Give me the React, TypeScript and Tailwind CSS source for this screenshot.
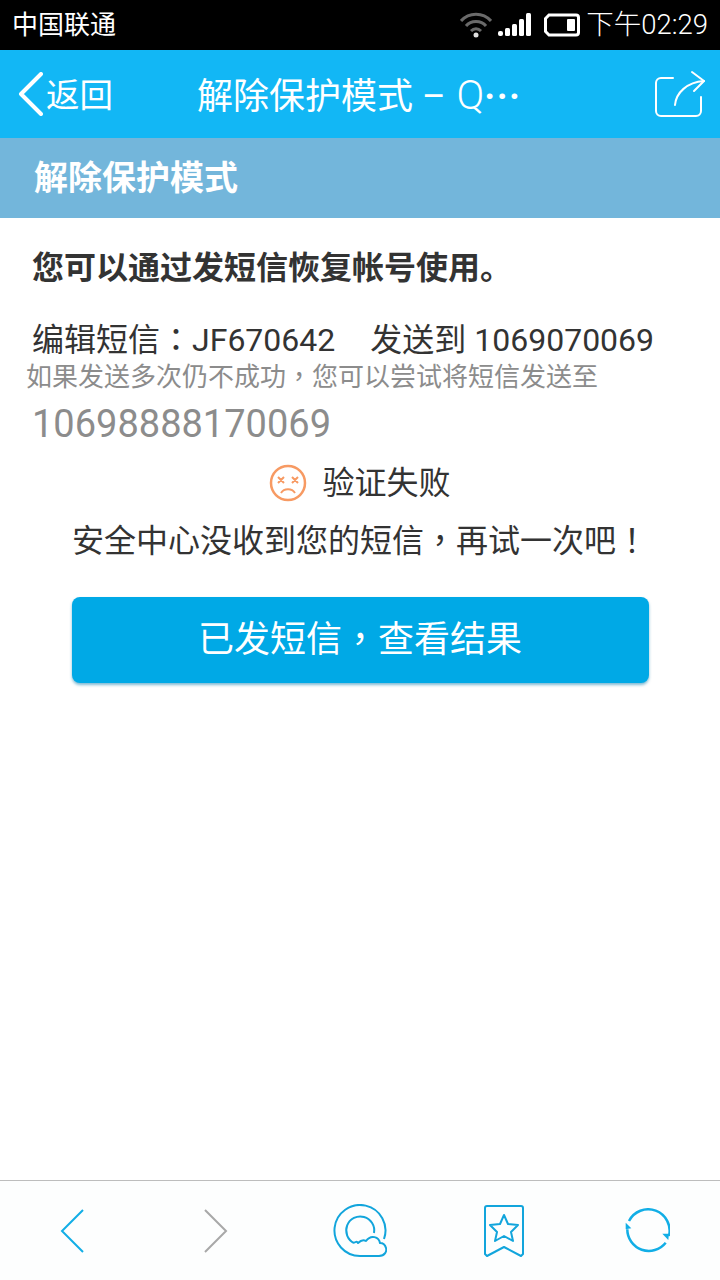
const font = "font-['Roboto','Noto_Sans_CJK_SC',sans-serif]";

// full-width punctuation sits in the middle of the cell in the reference
function P({ children }: { children: string }) {
  return <span className="font-['Roboto','Noto_Sans_CJK_TC',sans-serif]">{children}</span>;
}

function StatusBar() {
  return (
    <div className="flex h-[50px] items-center justify-between bg-black pr-[12px] pl-[12px] text-white">
      <span className="text-[26px] leading-none">中国联通</span>
      <div className="flex items-center">
        <svg width="32" height="26" viewBox="0 0 32 26" fill="none" stroke="#6a6a6a" strokeWidth="3">
          <path d="M1 9C9 0 23 0 31 9" />
          <path d="M6 14C11 8 21 8 26 14" />
          <path d="M11 19C14 16 18 16 21 19" />
          <circle cx="16" cy="23" r="2.500" fill="#e0e0e0" stroke="none" />
        </svg>
        <svg className="ml-[6px]" width="34" height="24" viewBox="0 0 34 24" fill="#fff">
          <rect x="0" y="18" width="5" height="5" rx="2" />
          <rect x="7" y="15" width="5" height="8" rx="1.500" />
          <rect x="14" y="11" width="5" height="12" rx="1.500" />
          <rect x="21" y="6" width="5" height="17" rx="1.500" />
          <rect x="28" y="0" width="5" height="23" rx="1.500" />
        </svg>
        <svg className="ml-[12px]" width="36" height="24" viewBox="0 0 36 24" fill="none">
          <path d="M5 2H32A2.500 2.500 0 0 1 34.500 4.500V19.500A2.500 2.500 0 0 1 32 22H5L1.500 18.500V5.500Z" stroke="#fff" strokeWidth="3" />
          <rect x="23" y="6" width="8" height="12" rx="1" fill="#fff" />
        </svg>
        <span className="ml-[6px] text-[27.5px] leading-none font-light">下午02:29</span>
      </div>
    </div>
  );
}

function NavBar() {
  return (
    <div className="flex h-[88px] items-center bg-[#12b7f5] text-white">
      <svg className="ml-[18px]" width="26" height="44" viewBox="0 0 26 44" fill="none" stroke="#fff" strokeWidth="4" strokeLinecap="round" strokeLinejoin="round">
        <path d="M23 2L3 22L23 42" />
      </svg>
      <span className="ml-[2px] w-[87px] pt-[3px] text-[33.500px] leading-none">返回</span>
      <div className="ml-[64px] flex items-baseline pt-[3px] leading-none">
        <span className="text-[36px]">解除保护模式 –</span>
        <span className="ml-[11px] text-[41px] font-light">Q</span>
        <span className="text-[36px] font-bold tracking-[1.500px]">···</span>
      </div>
      <svg className="mr-[14px] ml-auto" width="52" height="48" viewBox="0 0 52 48" fill="none" stroke="#fff" strokeWidth="2" strokeLinecap="round" strokeLinejoin="round">
        <path d="M19 8H7A5 5 0 0 0 2 13V41A5 5 0 0 0 7 46H42A5 5 0 0 0 47 41V27" />
        <path d="M21 35C22 23 33 12 50 11" />
        <path d="M38 2L50 11L40 21" />
      </svg>
    </div>
  );
}

function BottomBar() {
  return (
    <div className="flex h-[100px] items-center border-t border-[#bdbdbd] bg-[#fdfefe] pl-[59px]">
      <svg width="26" height="44" viewBox="0 0 26 44" fill="none" stroke="#12aee6" strokeWidth="2">
        <path d="M24 1L3 22L24 43" />
      </svg>
      <svg className="ml-[118px]" width="26" height="44" viewBox="0 0 26 44" fill="none" stroke="#a8a8a8" strokeWidth="2">
        <path d="M2 1L23 22L2 43" />
      </svg>
      <svg className="ml-[104px]" width="54" height="54" viewBox="0 0 54 54" fill="none" stroke="#12a5dc" strokeWidth="2" strokeLinejoin="round">
        <path d="M27 52A25.500 25.500 0 1 1 51 35" />
        <path d="M21 39A14 14 0 1 1 41 29" />
        <path d="M27 52H46C52 52 54 47 53 44C52 40 49 39 47 39C46 33 38 30 33 37C30 35 27 37 25 39C24 37 22 38 21 39" />
      </svg>
      <svg className="ml-[97px]" width="40" height="52" viewBox="0 0 40 52" fill="none" stroke="#12a5dc" strokeWidth="2" strokeLinejoin="round">
        <path d="M3 1H37A2 2 0 0 1 39 3V49L37 51L20 42L3 51L1 49V3A2 2 0 0 1 3 1Z" />
        <path d="M20 10L24 19L34 20L27 27L29 36L20 31L11 36L13 27L6 20L16 19Z" />
      </svg>
      <svg className="ml-[100px]" width="46" height="46" viewBox="0 0 46 46" fill="none" stroke="#12aee6" strokeWidth="2.500">
        <path d="M5 13A21.500 21.500 0 0 1 45 28" />
        <path d="M41.700 34.700A21.500 21.500 0 0 1 3.300 21.300" />
        <path d="M1.700 14.700L7.300 20.300L1.700 21.300Z" fill="#12aee6" stroke="none" />
        <path d="M38.300 25.700L45 25.700L44.300 32Z" fill="#12aee6" stroke="none" />
      </svg>
    </div>
  );
}

export default function App() {
  return (
    <div className={`flex h-[1280px] w-[720px] flex-col bg-white ${font}`}>
      <StatusBar />
      <NavBar />
      <div className="flex h-[80px] items-center bg-[#73b6db] pl-[34px] text-[34px] leading-none font-bold text-white">
        解除保护模式
      </div>
      <div className="flex-1">
        <div className="mt-[32px] pl-[32px] text-[32px] leading-[36px] font-bold text-[#333]">
          您可以通过发短信恢复帐号使用。
        </div>
        <div className="mt-[36px] flex pl-[32px] text-[32px] leading-[36px] text-[#333]">
          <span>编辑短信<P>：</P>JF670642</span>
          <span className="ml-[35px]">发送到 1069070069</span>
        </div>
        <div className="mt-[3px] pl-[26px] text-[26px] leading-[32px] text-[#8c8c8c]">
          如果发送多次仍不成功<P>，</P>您可以尝试将短信发送至
        </div>
        <div className="mt-[9px] pl-[32px] text-[38px] leading-[44px] text-[#8c8c8c]">10698888170069</div>
        <div className="mt-[17px] flex items-center justify-center">
          <svg width="38" height="38" viewBox="0 0 38 38" fill="none" stroke="#f79a63" strokeWidth="2.500">
            <circle cx="19" cy="19" r="17" />
            <path d="M9 13L15 19M15 13L9 19M23 13L29 19M29 13L23 19" strokeWidth="2" />
            <path d="M12 29C15 24 23 24 26 29" strokeWidth="2" />
          </svg>
          <span className="ml-[15px] text-[32px] leading-[40px] text-[#333]">验证失败</span>
        </div>
        <div className="mt-[18px] text-center text-[32px] leading-[40px] text-[#333]">
          安全中心没收到您的短信<P>，</P>再试一次吧<P>！</P>
        </div>
        <button className="mx-auto mt-[36px] block h-[86px] w-[577px] rounded-[8px] bg-[#00a9e6] text-[36px] text-white shadow-[0_2px_3px_rgba(0,120,170,0.5)]">
          已发短信<P>，</P>查看结果
        </button>
      </div>
      <BottomBar />
    </div>
  );
}
